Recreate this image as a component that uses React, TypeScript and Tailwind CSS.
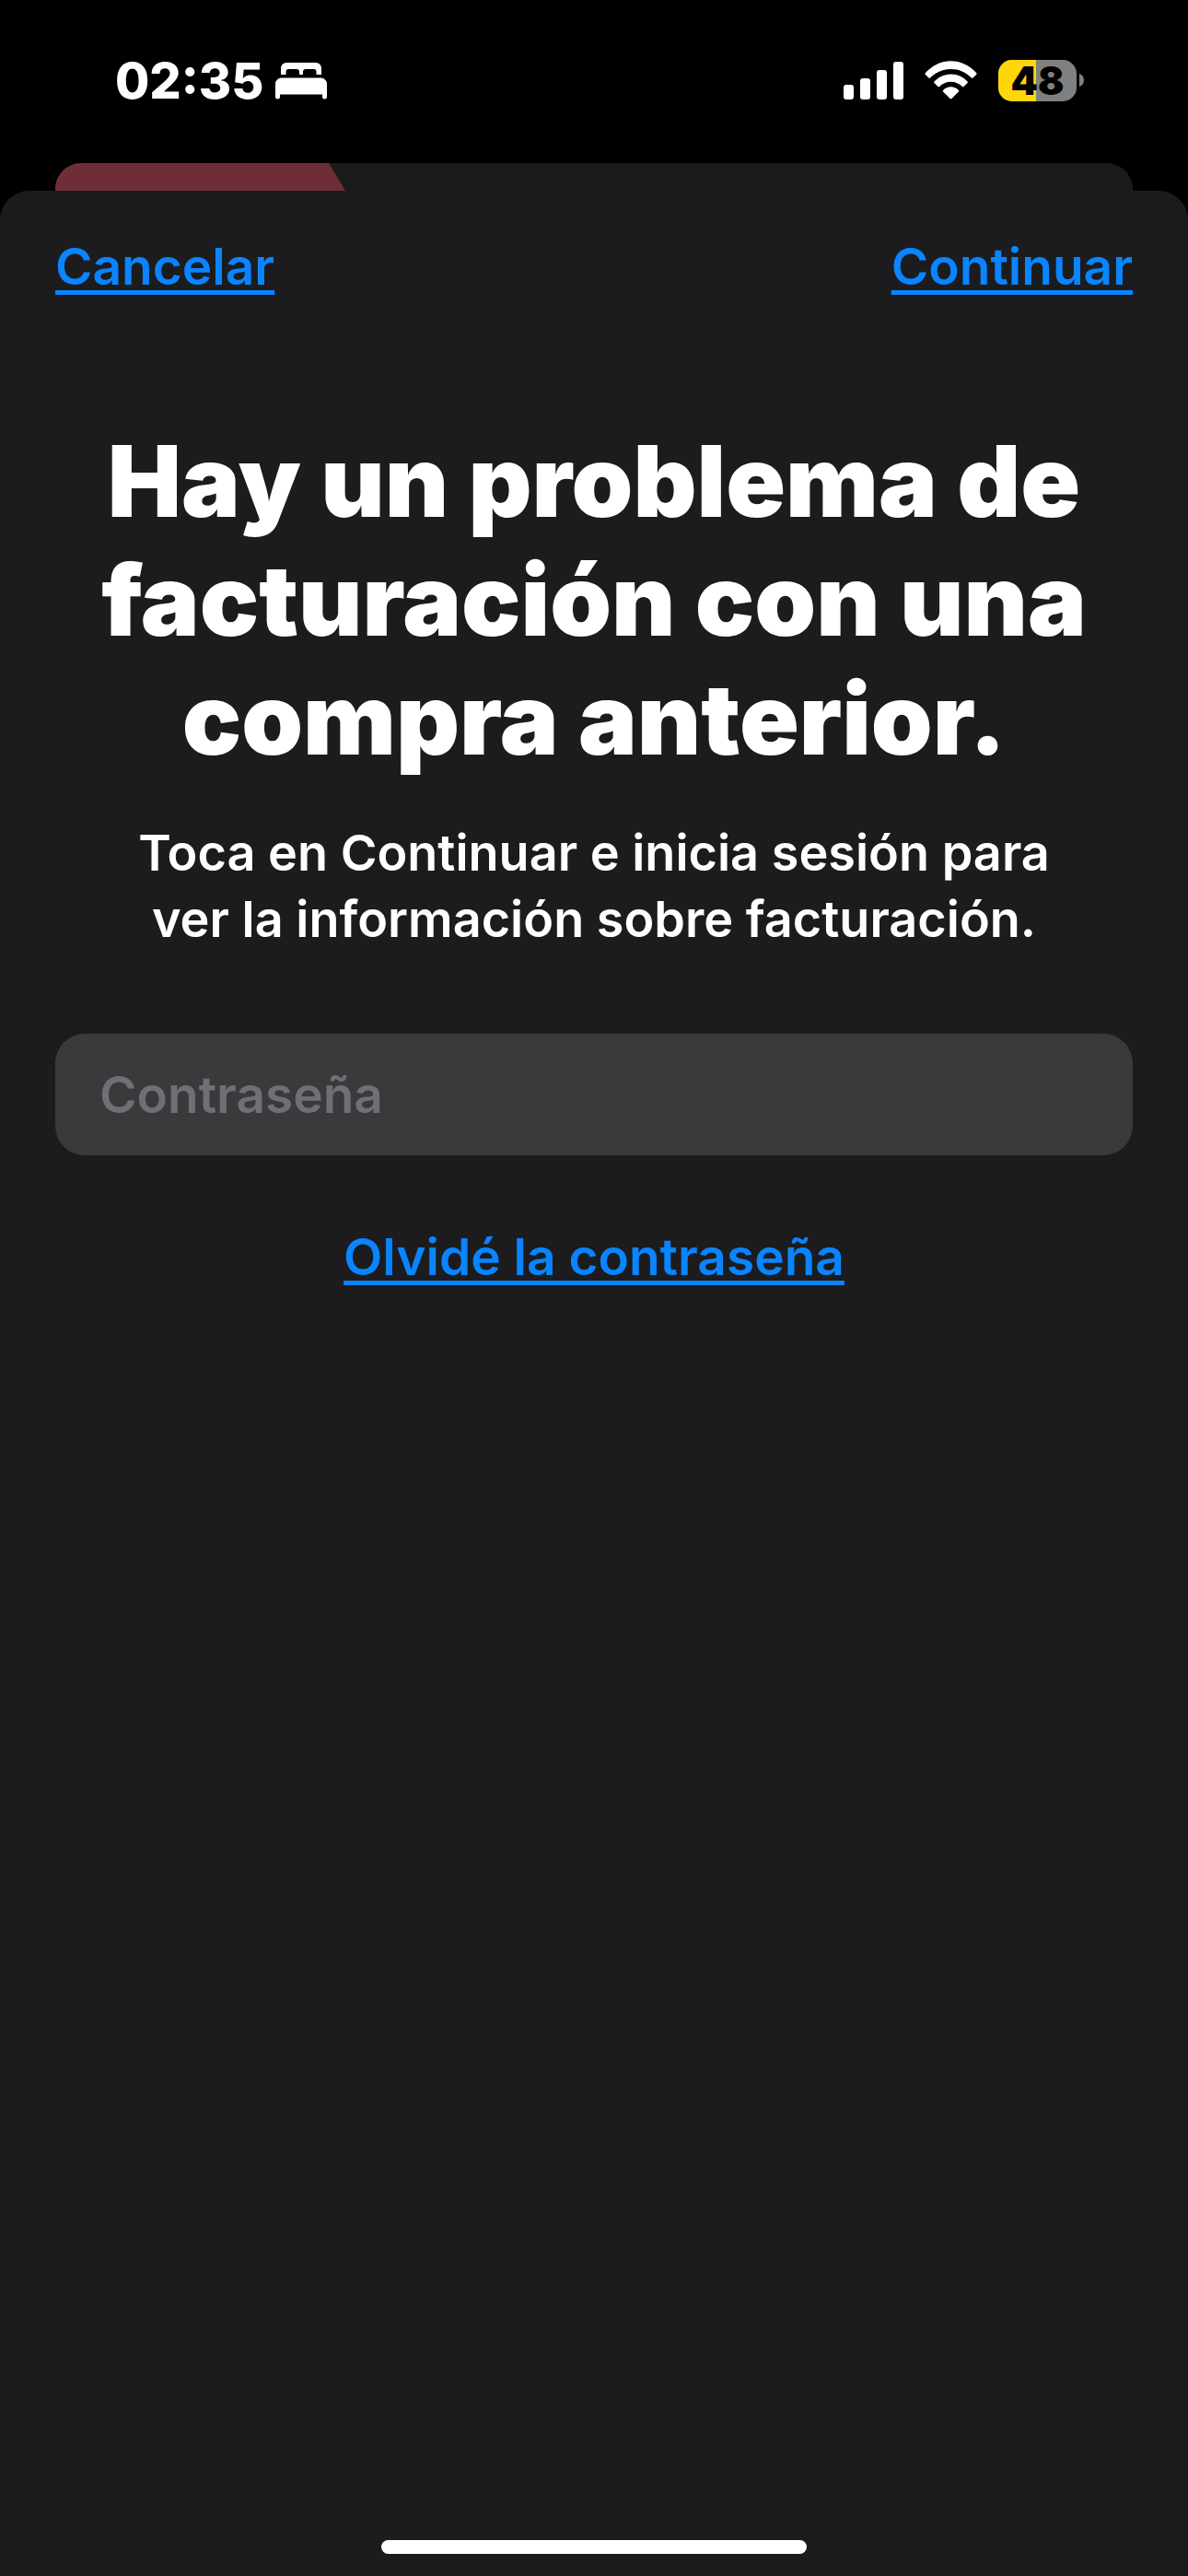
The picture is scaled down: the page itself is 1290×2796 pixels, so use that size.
import { useState } from "react";

function BedIcon() {
  return (
    <svg width="56" height="40" viewBox="0 0 56 40" fill="#fff" aria-hidden="true">
      <path d="M6 13V6a6 6 0 0 1 6-6h32a6 6 0 0 1 6 6v7h-5.500V10a3 3 0 0 0-3-3H33a3 3 0 0 0-3 3v3h-4v-3a3 3 0 0 0-3-3H14.500a3 3 0 0 0-3 3v3z" />
      <path d="M0 23a6.500 6.500 0 0 1 6.500-6.500h43A6.500 6.500 0 0 1 56 23v14a2.500 2.500 0 0 1-5 0v-2.500H5V37a2.500 2.500 0 0 1-5 0z" />
    </svg>
  );
}

function SignalIcon() {
  return (
    <svg width="65" height="41" viewBox="0 0 65 41" fill="#fff" aria-hidden="true">
      <rect x="0" y="25" width="11" height="16" rx="3" />
      <rect x="18" y="18" width="11" height="23" rx="3" />
      <rect x="36" y="9" width="11" height="32" rx="3" />
      <rect x="54" y="0" width="11" height="41" rx="3" />
    </svg>
  );
}

function WifiIcon() {
  return (
    <svg width="57" height="42" viewBox="0 0 58 42" fill="#fff" aria-hidden="true">
      <path d="M.7 13.200C8.200 4.800 18 0 29 0s20.800 4.800 28.300 13.200c.4.500.4 1.100 0 1.500l-3.800 3.800c-.5.500-1.100.5-1.600 0C45.500 12 37.800 8.700 29 8.700S12.500 12 6.100 18.500c-.5.500-1.100.5-1.600 0L.7 14.700c-.4-.4-.4-1 0-1.500z" />
      <path d="M10.600 22.600C15.500 17.400 21.800 14.500 29 14.500s13.500 2.900 18.400 8.100c.4.500.4 1 0 1.400l-4.200 4.200c-.5.500-1 .4-1.500 0-3.400-3.500-7.700-5.500-12.700-5.500s-9.300 2-12.700 5.500c-.5.400-1 .5-1.500 0L10.600 24c-.4-.4-.4-.9 0-1.400z" />
      <path d="M20.400 32.200c2.400-2.300 5.300-3.700 8.600-3.700s6.200 1.400 8.600 3.700c.5.500.5 1 0 1.500l-7.700 7.700c-.6.600-1.200.6-1.800 0l-7.700-7.700c-.5-.5-.5-1 0-1.500z" />
    </svg>
  );
}

function Battery({ level }: { level: number }) {
  return (
    <div className="flex items-center gap-[3px]">
      <div className="relative flex h-[45px] w-[85px] items-center justify-center rounded-[15px] bg-[#808080]">
        <div className="absolute inset-y-0 left-0 rounded-l-[15px] bg-[#ffd60a]" style={{ width: `${level}%` }}></div>
        <span className="relative text-[42px] leading-[45px] font-black text-black">{level}</span>
      </div>
      <svg width="5" height="14" viewBox="0 0 5 14" fill="#808080" aria-hidden="true">
        <path d="M0 0c3 1 5 3.600 5 7s-2 6-5 7z" />
      </svg>
    </div>
  );
}

function StatusBar() {
  return (
    <header className="flex h-[177px] items-start justify-between pt-[57px] pr-[113px] pl-[125px] text-white">
      <div className="flex h-[62px] items-center gap-[12px]">
        <span className="text-[54px] leading-[62px] font-extrabold">02:35</span>
        <BedIcon />
      </div>
      <div className="flex h-[60px] items-center gap-[23px]">
        <SignalIcon />
        <WifiIcon />
        <Battery level={48} />
      </div>
    </header>
  );
}

const linkStyle =
  "text-[#0a84ff] underline decoration-[5px] underline-offset-[6px] [text-decoration-skip-ink:none]";

export default function App() {
  const [password, setPassword] = useState("");

  return (
    <div className="flex min-h-screen flex-col bg-black font-['Inter','Liberation_Sans',sans-serif] text-[55px] leading-[72px] font-semibold">
      <StatusBar />

      {/* card that stays behind the sheet */}
      <div className="mx-[60px] h-[30px] overflow-hidden rounded-t-[28px] bg-[#1b1b1c]">
        <div className="h-full w-[315px] bg-[#6f2e37] [clip-path:polygon(0_0,297px_0,100%_100%,0_100%)]"></div>
      </div>

      <main className="flex flex-1 flex-col rounded-t-[32px] bg-[#1c1c1e] px-[60px] pt-[46px]">
        <nav className="flex justify-between">
          <a href="#cancelar" className={linkStyle}>Cancelar</a>
          <a href="#continuar" className={linkStyle}>Continuar</a>
        </nav>

        <h1 className="mt-[133px] text-center text-[107px] leading-[129px] font-black text-white">
          Hay un problema de facturación con una compra anterior.
        </h1>
        <p className="mt-[45px] px-[60px] text-center text-[54px] text-white">
          Toca en Continuar e inicia sesión para ver la información sobre facturación.
        </p>

        <form className="mt-[88px] flex flex-col items-center" onSubmit={(e) => e.preventDefault()}>
          <input
            type="password"
            aria-label="Contraseña"
            placeholder="Contraseña"
            value={password}
            onChange={(e) => setPassword(e.target.value)}
            className="h-[132px] w-full rounded-[32px] bg-[#3a3a3c] px-[48px] text-white outline-none placeholder:text-[#6f6f74]"
          />
          <a href="#olvide" className={`mt-[74px] ${linkStyle}`}>Olvidé la contraseña</a>
        </form>

        <div className="mx-auto mt-auto mb-[24px] h-[15px] w-[462px] rounded-full bg-white"></div>
      </main>
    </div>
  );
}
